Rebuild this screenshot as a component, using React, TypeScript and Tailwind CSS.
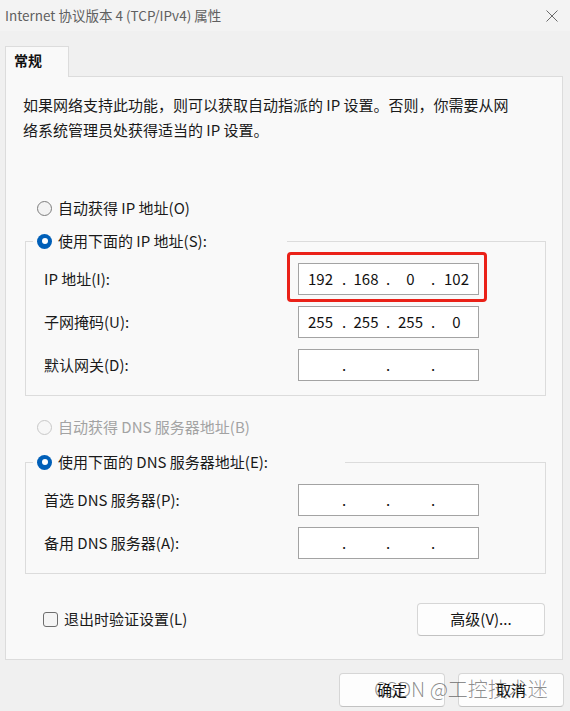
import React from 'react';

function Radio({ checked, disabled }: { checked?: boolean; disabled?: boolean }) {
  if (checked) {
    return (
      <span className="w-[15px] h-[15px] rounded-full bg-[#005fb8] flex items-center justify-center flex-shrink-0">
        <span className="w-[6px] h-[6px] rounded-full bg-white"></span>
      </span>
    );
  }
  return (
    <span
      className={
        disabled
          ? 'w-[15px] h-[15px] rounded-full border border-[#c8c8c8] bg-[#f7f7f7] flex-shrink-0'
          : 'w-[15px] h-[15px] rounded-full border border-[#7d7d7d] bg-[#f3f3f3] flex-shrink-0'
      }
    ></span>
  );
}

function IpBox({ values }: { values: string[] }) {
  const widths = ['w-[43px]', 'w-[40px]', 'w-[41px]', 'w-[43px]'];
  return (
    <div className="w-[181px] h-[32px] border border-[#a3a3a3] bg-white flex items-center text-[15px] text-[#111]">
      {values.map((v, i) => (
        <React.Fragment key={i}>
          <span className={`${widths[i]} text-center`}>{v}</span>
          {i < 3 && <span className="w-[4px] text-center">.</span>}
        </React.Fragment>
      ))}
    </div>
  );
}

function FieldRow({ label, values, highlight }: { label: string; values: string[]; highlight?: boolean }) {
  return (
    <div className="flex items-center pl-[18px]">
      <span className="w-[254px]">{label}</span>
      <div className="relative">
        <IpBox values={values} />
        {highlight && (
          <div className="absolute -left-[11px] -top-[11px] w-[200px] h-[50px] border-[3px] border-[#ea2118] rounded-[4px]"></div>
        )}
      </div>
    </div>
  );
}

export default function App() {
  const empty = ['', '', '', ''];
  return (
    <div className="w-[570px] h-[711px] bg-[#f0f0f0] relative overflow-hidden font-['Noto_Sans_CJK_SC','Liberation_Sans',sans-serif] text-[#1a1a1a]">
      <div className="h-[31px] bg-[#f3f3f3] flex items-center justify-between pl-[5px] pr-[12px]">
        <span className="text-[13.5px] text-[#5f5f5f]">Internet 协议版本 4 (TCP/IPv4) 属性</span>
        <svg width="12" height="12" viewBox="0 0 12 12" className="text-[#6a6a6a]">
          <path d="M0.5 0.5 L11.5 11.5 M11.5 0.5 L0.5 11.5" stroke="currentColor" strokeWidth="1" fill="none" />
        </svg>
      </div>

      <div className="px-[5px] pt-[15px]">
        <div className="relative z-10 -mb-px w-[64px] h-[31px] border border-b-0 border-[#dcdcdc] bg-[#f9f9f9] pl-[8px] pt-[3px] text-[14px] font-bold text-[#111]">
          常规
        </div>
        <div className="w-[558px] h-[584px] border border-[#dcdcdc] bg-[#f9f9f9] pl-[17px] pr-[17px] pt-[15px] text-[15px]">
          <p className="leading-[25px] whitespace-nowrap">
            如果网络支持此功能，则可以获取自动指派的 IP 设置。否则，你需要从网
            <br />
            络系统管理员处获得适当的 IP 设置。
          </p>

          <div className="mt-[54px] ml-[14px] h-[24px] flex items-center gap-[6px]">
            <Radio />
            <span>自动获得 IP 地址(O)</span>
          </div>

          <div className="mt-[21px] ml-[2px] w-[521px] border border-[#dcdcdc] pb-[14px]">
            <div className="-mt-[13px] ml-[7px] w-[254px] h-[24px] bg-[#f9f9f9] pl-[4px] flex items-center gap-[6px]">
              <Radio checked />
              <span>使用下面的 IP 地址(S):</span>
            </div>
            <div className="mt-[10px] flex flex-col gap-[11px]">
              <FieldRow label="IP 地址(I):" values={['192', '168', '0', '102']} highlight />
              <FieldRow label="子网掩码(U):" values={['255', '255', '255', '0']} />
              <FieldRow label="默认网关(D):" values={empty} />
            </div>
          </div>

          <div className="mt-[19px] ml-[14px] h-[24px] flex items-center gap-[6px] text-[#a3a3a3]">
            <Radio disabled />
            <span>自动获得 DNS 服务器地址(B)</span>
          </div>

          <div className="mt-[23px] ml-[2px] w-[521px] border border-[#dcdcdc] pb-[14px]">
            <div className="-mt-[13px] ml-[7px] w-[312px] h-[24px] bg-[#f9f9f9] pl-[4px] flex items-center gap-[6px]">
              <Radio checked />
              <span>使用下面的 DNS 服务器地址(E):</span>
            </div>
            <div className="mt-[10px] flex flex-col gap-[11px]">
              <FieldRow label="首选 DNS 服务器(P):" values={empty} />
              <FieldRow label="备用 DNS 服务器(A):" values={empty} />
            </div>
          </div>

          <div className="mt-[29px] h-[33px] flex items-center justify-between">
            <div className="ml-[20px] flex items-center gap-[6px]">
              <span className="w-[15px] h-[15px] rounded-[3px] border border-[#6e6e6e] bg-[#f5f5f5]"></span>
              <span>退出时验证设置(L)</span>
            </div>
            <button className="w-[128px] h-[33px] rounded-[4px] border border-[#d6d6d6] border-b-[#c2c2c2] bg-[#fdfdfd] text-[15px] text-[#111]">
              高级(V)...
            </button>
          </div>
        </div>
      </div>

      <div className="mt-[13px] pr-[6px] flex justify-end gap-[13px]">
        <button className="w-[106px] h-[34px] rounded-[4px] border border-[#d6d6d6] border-b-[#c2c2c2] bg-[#fdfdfd] text-[15px] text-[#111]">
          确定
        </button>
        <button className="w-[106px] h-[34px] rounded-[4px] border border-[#d6d6d6] border-b-[#c2c2c2] bg-[#fdfdfd] text-[15px] text-[#111]">
          取消
        </button>
      </div>

      <div className="absolute left-[374px] top-[674px] text-[20px] font-light text-[#000]/45 whitespace-nowrap pointer-events-none">
        CSDN @工控技术迷
      </div>
    </div>
  );
}
